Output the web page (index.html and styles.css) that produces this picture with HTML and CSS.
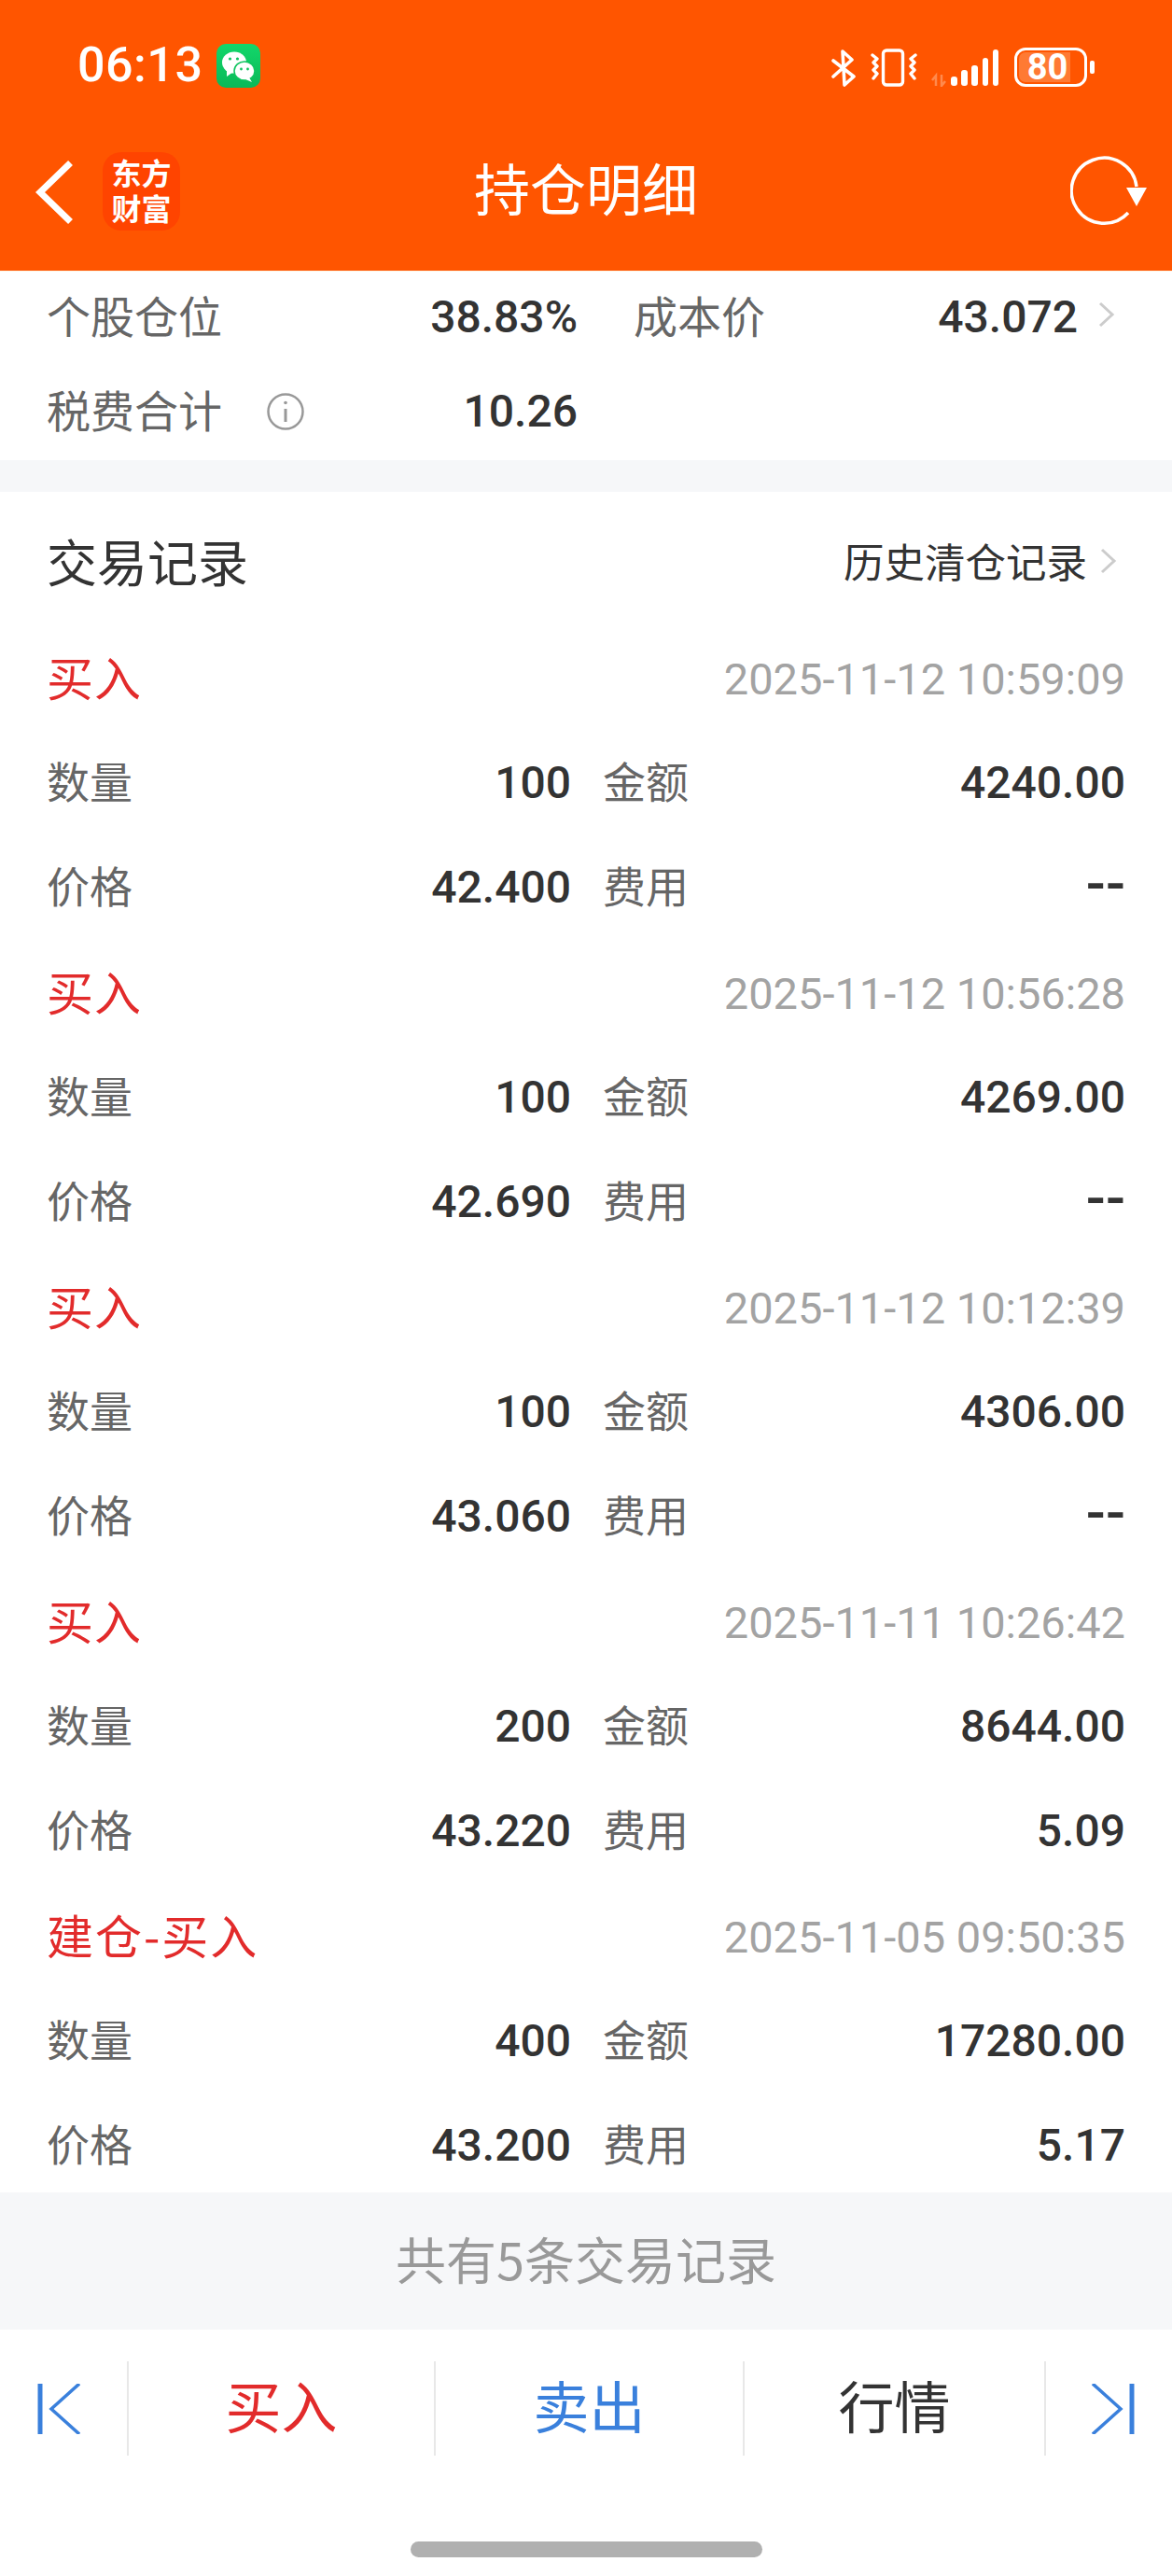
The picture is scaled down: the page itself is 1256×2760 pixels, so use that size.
FILE: index.html
```html
<!DOCTYPE html>
<html lang="zh-CN">
<head>
  <meta charset="UTF-8">
  <meta name="viewport" content="width=device-width, initial-scale=1.0">
  <link rel="stylesheet" href="styles.css">
  <title>持仓明细</title>
</head>
<body>

<div id="phone">
  <header class="top">
    <div class="status">
      <span class="clock">06:13</span>
      <span class="wechat">
        <svg width="47" height="47" viewBox="0 0 47 47">
          <ellipse cx="19" cy="20" rx="13" ry="11.5" fill="#fff"/>
          <path d="M11 28 L11 35 L18 30 Z" fill="#fff"/>
          <ellipse cx="30" cy="29" rx="11" ry="10" fill="#fff" stroke="#0fc45f" stroke-width="1.5"/>
          <path d="M35 36 L38 41 L31 38 Z" fill="#fff"/>
          <circle cx="14.5" cy="16" r="1.6" fill="#0fc45f"/>
          <circle cx="22.5" cy="16" r="1.6" fill="#0fc45f"/>
          <circle cx="26.5" cy="27" r="1.4" fill="#0fc45f"/>
          <circle cx="33.5" cy="27" r="1.4" fill="#0fc45f"/>
        </svg>
      </span>
      <span class="status-right">
        <svg class="ic-bt" width="26" height="42" viewBox="0 0 26 42" fill="none" stroke="#fff" stroke-width="3.6" stroke-linecap="round" stroke-linejoin="round">
          <path d="M2 14 L24 31 L14 40 L12 4 L22 13 L2 31"/>
        </svg>
        <svg class="ic-vib" width="50" height="42" viewBox="0 0 50 42" fill="none" stroke="#fff" stroke-width="3.4" stroke-linecap="round" stroke-linejoin="round">
          <rect x="13.5" y="3" width="21" height="37" rx="3.5"/>
          <path d="M2 8 L7 12 L3 16 L7 20 L3 24 L7 28 L3 33"/>
          <path d="M48 8 L43 12 L47 16 L43 20 L47 24 L43 28 L47 33"/>
        </svg>
        <svg class="ic-sig" width="72" height="42" viewBox="0 0 72 42">
          <path d="M5 41 L5 30 L1 35 M11 29 L11 41 L15 36" fill="none" stroke="#ff8a4d" stroke-width="2.5"/>
          <rect x="21" y="31" width="7" height="10" rx="3" fill="#fff"/>
          <rect x="32" y="24" width="7" height="17" rx="3" fill="#fff"/>
          <rect x="43" y="19" width="7" height="22" rx="3" fill="#fff"/>
          <rect x="55" y="11" width="6" height="30" rx="3" fill="#fff"/>
          <rect x="66" y="2" width="6" height="39" rx="3" fill="#fff"/>
        </svg>
        <span class="battery"><span class="battery-num">80</span></span>
        <span class="battery-nub"></span>
      </span>
    </div>
    <div class="navbar">
      <svg class="back" width="40" height="68" viewBox="0 0 40 68" fill="none" stroke="#fff" stroke-width="7" stroke-linecap="square">
        <path d="M35 5 L5 34 L35 63"/>
      </svg>
      <span class="app-logo">东方<br>财富</span>
      <h1 class="nav-title">持仓明细</h1>
      <svg class="refresh" width="84" height="80" viewBox="0 0 84 80" fill="none">
        <path d="M62 62 A35 35 0 1 1 71 34" stroke="#fff" stroke-width="3.5"/>
        <path d="M60 35 L82 35 L71 55 Z" fill="#fff"/>
      </svg>
    </div>
  </header>

  <section class="summary">
    <div class="sum-row">
      <span class="sum-label">个股仓位</span>
      <span class="sum-val">38.83%</span>
      <span class="sum-label second">成本价</span>
      <span class="sum-val wide">43.072</span>
      <svg class="chev" width="18" height="28" viewBox="0 0 18 28" fill="none" stroke="#ccc" stroke-width="3"><path d="M2 2 L15 14 L2 26"/></svg>
    </div>
    <div class="sum-row">
      <span class="sum-label with-icon">税费合计
        <svg width="40" height="42" viewBox="0 0 40 42" fill="none" stroke="#999" stroke-width="2.5">
          <circle cx="20" cy="21" r="18.5"/>
          <path d="M20 18 L20 32" stroke-width="3"/>
          <circle cx="20" cy="11.5" r="1.8" fill="#999" stroke="none"/>
        </svg>
      </span>
      <span class="sum-val">10.26</span>
    </div>
  </section>

  <div class="gap"></div>

  <section class="records">
    <div class="rec-head">
      <h2>交易记录</h2>
      <span class="history">历史清仓记录
        <svg class="chev" width="18" height="28" viewBox="0 0 18 28" fill="none" stroke="#ccc" stroke-width="3"><path d="M2 2 L15 14 L2 26"/></svg>
      </span>
    </div>

    <div class="rec">
      <div class="rec-top"><span class="rec-type">买入</span><span class="rec-time">2025-11-12 10:59:09</span></div>
      <div class="rec-line"><span class="k">数量</span><span class="v">100</span><span class="k k2">金额</span><span class="v v2">4240.00</span></div>
      <div class="rec-line"><span class="k">价格</span><span class="v">42.400</span><span class="k k2">费用</span><span class="v v2 dash">--</span></div>
    </div>
    <div class="rec">
      <div class="rec-top"><span class="rec-type">买入</span><span class="rec-time">2025-11-12 10:56:28</span></div>
      <div class="rec-line"><span class="k">数量</span><span class="v">100</span><span class="k k2">金额</span><span class="v v2">4269.00</span></div>
      <div class="rec-line"><span class="k">价格</span><span class="v">42.690</span><span class="k k2">费用</span><span class="v v2 dash">--</span></div>
    </div>
    <div class="rec">
      <div class="rec-top"><span class="rec-type">买入</span><span class="rec-time">2025-11-12 10:12:39</span></div>
      <div class="rec-line"><span class="k">数量</span><span class="v">100</span><span class="k k2">金额</span><span class="v v2">4306.00</span></div>
      <div class="rec-line"><span class="k">价格</span><span class="v">43.060</span><span class="k k2">费用</span><span class="v v2 dash">--</span></div>
    </div>
    <div class="rec">
      <div class="rec-top"><span class="rec-type">买入</span><span class="rec-time">2025-11-11 10:26:42</span></div>
      <div class="rec-line"><span class="k">数量</span><span class="v">200</span><span class="k k2">金额</span><span class="v v2">8644.00</span></div>
      <div class="rec-line"><span class="k">价格</span><span class="v">43.220</span><span class="k k2">费用</span><span class="v v2">5.09</span></div>
    </div>
    <div class="rec">
      <div class="rec-top"><span class="rec-type long">建仓-买入</span><span class="rec-time">2025-11-05 09:50:35</span></div>
      <div class="rec-line"><span class="k">数量</span><span class="v">400</span><span class="k k2">金额</span><span class="v v2">17280.00</span></div>
      <div class="rec-line"><span class="k">价格</span><span class="v">43.200</span><span class="k k2">费用</span><span class="v v2">5.17</span></div>
    </div>
  </section>

  <div class="total">共有5条交易记录</div>

  <nav class="toolbar">
    <span class="tool edge">
      <svg width="46" height="54" viewBox="0 0 46 54" fill="none" stroke="#3a80dc" stroke-width="3.5"><path d="M3 0 L3 54" stroke-width="5"/><path d="M45 0 L15 27 L45 54"/></svg>
    </span>
    <span class="tool main buy">买入</span>
    <span class="tool main sell">卖出</span>
    <span class="tool main quote">行情</span>
    <span class="tool edge">
      <svg width="46" height="54" viewBox="0 0 46 54" fill="none" stroke="#3a80dc" stroke-width="3.5"><path d="M43 0 L43 54" stroke-width="5"/><path d="M1 0 L31 27 L1 54"/></svg>
    </span>
  </nav>

  <div class="home-bar"></div>
</div>

</body>
</html>
```

FILE: styles.css
```css
* {
  box-sizing: border-box;
}

body {
  margin: 0;
  background: #fff;
  font-family: "Noto Sans CJK SC", "Noto Sans", sans-serif;
  color: #333;
}

#phone {
  width: 1256px;
  height: 2760px;
  display: flex;
  flex-direction: column;
  overflow: hidden;
}

.top {
  height: 290px;
  background: #ff5500;
  color: #fff;
  flex: none;
}

.status {
  height: 140px;
  padding: 47px 83px 0 83px;
  display: flex;
  align-items: flex-start;
}

.clock {
  font-family: Roboto, sans-serif;
  font-weight: 500;
  font-size: 52px;
  line-height: 46px;
  letter-spacing: 0.5px;
  width: 149px;
}

.wechat {
  width: 47px;
  height: 47px;
  border-radius: 10px;
  background: linear-gradient(#12d76a, #0ab858);
  display: block;
}

.wechat svg {
  display: block;
}

.status-right {
  margin-left: auto;
  display: flex;
  align-items: flex-start;
  padding-top: 4px;
}

.ic-vib {
  margin-left: 16px;
}

.ic-sig {
  margin-left: 15px;
}

.battery {
  width: 78px;
  height: 42px;
  margin-left: 17px;
  border: 3px solid #fff;
  border-radius: 12px;
  padding: 2px;
  background: linear-gradient(90deg, #ff7a33 0, #ff7a33 81%, transparent 81%);
  background-clip: content-box;
  background-origin: content-box;
  display: flex;
  align-items: center;
  justify-content: center;
}

.battery-num {
  font-family: Roboto, sans-serif;
  font-weight: 700;
  font-size: 38px;
  line-height: 32px;
  margin-right: 7px;
}

.battery-nub {
  width: 5px;
  height: 14px;
  margin: 14px 0 0 3px;
  background: #fff;
  border-radius: 2px;
}

.navbar {
  height: 150px;
  position: relative;
  display: flex;
  align-items: flex-start;
}

.back {
  margin: 32px 0 0 38px;
}

.app-logo {
  width: 83px;
  height: 84px;
  margin: 23px 0 0 32px;
  background: #ff4400;
  border-radius: 20px;
  font-family: "Liberation Sans", "Noto Sans CJK SC", sans-serif;
  font-size: 32px;
  font-weight: 700;
  line-height: 38px;
  text-align: center;
  padding-top: 5px;
}

.nav-title {
  position: absolute;
  left: 0;
  right: 0;
  top: 22px;
  margin: 0;
  font-size: 60px;
  font-weight: 400;
  line-height: 76px;
  text-align: center;
}

.refresh {
  margin: 26px 25px 0 auto;
}

.summary {
  height: 203px;
  padding: 16px 60px 0 50px;
  border-top: 1px solid #fff6e6;
  flex: none;
}

.sum-row {
  height: 60px;
  display: flex;
  align-items: center;
}

.sum-row:first-child {
  margin-bottom: 41px;
}

.sum-label {
  font-size: 47px;
  line-height: 60px;
  color: #666;
  width: 260px;
  white-space: nowrap;
  display: flex;
  align-items: center;
}

.sum-label.second {
  width: 150px;
  margin-left: 60px;
}

.with-icon svg {
  margin: 6px 0 0 48px;
  flex: none;
}

.sum-val {
  font-family: Roboto, sans-serif;
  font-weight: 500;
  font-size: 48px;
  line-height: 60px;
  padding-top: 6px;
  color: #333;
  width: 309px;
  text-align: right;
}

.sum-val.wide {
  width: 326px;
}

.sum-row .chev {
  margin-left: 22px;
}

.gap {
  height: 34px;
  background: #f6f7f9;
  flex: none;
}

.records {
  flex: 1;
  min-height: 0;
  padding: 0 50px 0 50px;
  overflow: hidden;
}

.rec-head {
  height: 141px;
  padding-top: 7px;
  display: flex;
  align-items: center;
  justify-content: space-between;
}

.rec-head h2 {
  margin: 0;
  font-size: 54px;
  font-weight: 400;
  line-height: 70px;
}

.history {
  font-size: 43.5px;
  line-height: 60px;
  display: flex;
  align-items: center;
  margin-right: 9px;
}

.history .chev {
  margin-left: 14px;
}

.rec {
  height: 337px;
}

.rec-top,
.rec-line {
  height: 112.33px;
  display: flex;
  align-items: center;
}

.rec-line {
  padding-bottom: 3px;
}

.rec-top {
  justify-content: space-between;
}

.rec-type {
  color: #e22b2b;
  font-size: 50px;
  letter-spacing: 1px;
}

.rec-type.long {
  letter-spacing: 2px;
}

.rec-time {
  font-family: Roboto, sans-serif;
  font-size: 47px;
  color: #a3a3a3;
  padding-top: 6px;
}

.k {
  font-size: 46px;
  color: #666;
  width: 121px;
}

.k2 {
  width: 110px;
  margin-left: 34px;
}

.v {
  font-family: Roboto, sans-serif;
  font-weight: 500;
  font-size: 48px;
  padding-top: 7px;
  color: #333;
  width: 441px;
  text-align: right;
}

.v2 {
  flex: 1;
  width: auto;
}

.dash {
  font-size: 62px;
  line-height: 1;
  padding-top: 0;
}

.total {
  height: 147px;
  padding-bottom: 6px;
  flex: none;
  background: #f6f7f9;
  color: #999;
  font-size: 54px;
  display: flex;
  align-items: center;
  justify-content: center;
}

.toolbar {
  height: 227px;
  padding-top: 34px;
  flex: none;
  display: flex;
  align-items: flex-start;
}

.tool {
  height: 101px;
  display: flex;
  align-items: center;
  justify-content: center;
  border-left: 2px solid #e8e8e8;
}

.tool.edge:first-child {
  width: 136px;
  border-left: 0;
  justify-content: flex-start;
  padding-left: 40px;
}

.tool.edge:last-of-type {
  width: 137px;
  justify-content: flex-start;
  padding-left: 49px;
}

.main {
  font-size: 60px;
  padding-bottom: 10px;
  width: 329px;
}

.main.sell {
  width: 331px;
}

.main.quote {
  width: 323px;
}

.buy {
  color: #e22b2b;
}

.sell {
  color: #3a80dc;
}

.quote {
  color: #333;
}

.home-bar {
  height: 17px;
  width: 377px;
  margin: 0 auto 20px;
  border-radius: 9px;
  background: #b0b0b0;
  flex: none;
}
```
